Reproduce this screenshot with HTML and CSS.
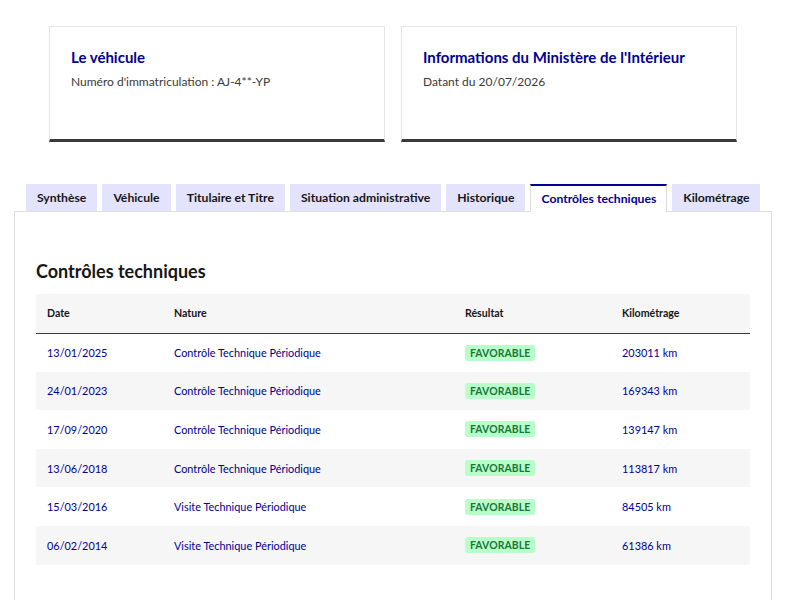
FILE: index.html
```html
<!DOCTYPE html>
<html lang="fr">
<head>
    <meta charset="UTF-8">
    <meta name="viewport" content="width=device-width, initial-scale=1.0">
    <title>Contrôles techniques</title>
    <link rel="stylesheet" href="styles.css">
</head>
<body>
    <div class="cards">
        <div class="card">
            <h2 class="card-title">Le véhicule</h2>
            <p class="card-text">Numéro d'immatriculation : AJ-4**-YP</p>
        </div>
        <div class="card">
            <h2 class="card-title">Informations du Ministère de l'Intérieur</h2>
            <p class="card-text">Datant du 20/07/2026</p>
        </div>
    </div>

    <div class="tabs">
        <ul class="tab-list">
            <li class="tab">Synthèse</li>
            <li class="tab">Véhicule</li>
            <li class="tab">Titulaire et Titre</li>
            <li class="tab">Situation administrative</li>
            <li class="tab">Historique</li>
            <li class="tab active">Contrôles techniques</li>
            <li class="tab">Kilométrage</li>
        </ul>
        <div class="tab-panel">
            <h3 class="panel-title">Contrôles techniques</h3>
            <table class="ct-table">
                <thead>
                    <tr>
                        <th class="col-date">Date</th>
                        <th class="col-nature">Nature</th>
                        <th class="col-result">Résultat</th>
                        <th>Kilométrage</th>
                    </tr>
                </thead>
                <tbody>
                    <tr>
                        <td>13/01/2025</td>
                        <td>Contrôle Technique Périodique</td>
                        <td><span class="badge">Favorable</span></td>
                        <td>203011 km</td>
                    </tr>
                    <tr>
                        <td>24/01/2023</td>
                        <td>Contrôle Technique Périodique</td>
                        <td><span class="badge">Favorable</span></td>
                        <td>169343 km</td>
                    </tr>
                    <tr>
                        <td>17/09/2020</td>
                        <td>Contrôle Technique Périodique</td>
                        <td><span class="badge">Favorable</span></td>
                        <td>139147 km</td>
                    </tr>
                    <tr>
                        <td>13/06/2018</td>
                        <td>Contrôle Technique Périodique</td>
                        <td><span class="badge">Favorable</span></td>
                        <td>113817 km</td>
                    </tr>
                    <tr>
                        <td>15/03/2016</td>
                        <td>Visite Technique Périodique</td>
                        <td><span class="badge">Favorable</span></td>
                        <td>84505 km</td>
                    </tr>
                    <tr>
                        <td>06/02/2014</td>
                        <td>Visite Technique Périodique</td>
                        <td><span class="badge">Favorable</span></td>
                        <td>61386 km</td>
                    </tr>
                </tbody>
            </table>
        </div>
    </div>
</body>
</html>
```

FILE: styles.css
```css
* {
    box-sizing: border-box;
}

body {
    font-family: Lato, Arial, sans-serif;
    background-color: #fff;
    color: #161616;
    margin: 0;
    padding: 26px 0 0 14px;
    width: 772px;
}

.cards {
    display: flex;
    gap: 16px;
    margin: 0 35px;
}

.card {
    flex: 1;
    height: 116px;
    border: 1px solid #e5e5e5;
    border-bottom: 3px solid #3a3a3a;
    padding: 18px 21px 0;
}

.card-title {
    margin: 0;
    font-size: 15px;
    font-weight: 700;
    color: #000091;
    line-height: 24px;
}

.card-text {
    margin: 1px 0 0;
    font-size: 12px;
    color: #3a3a3a;
    line-height: 24px;
}

.tabs {
    margin-top: 42px;
}

.tab-list {
    list-style: none;
    margin: 0;
    padding: 0 0 0 12px;
    display: flex;
    gap: 5px;
    align-items: flex-end;
}

.tab {
    background-color: #e3e3fd;
    font-size: 12.2px;
    font-weight: 700;
    color: #161616;
    white-space: nowrap;
    height: 27px;
    line-height: 27px;
    padding: 0 11px;
}

.tab.active {
    background-color: #fff;
    color: #000091;
    border-top: 2px solid #000091;
    border-left: 1px solid #ddd;
    border-right: 1px solid #ddd;
    height: 28px;
    line-height: 25px;
    padding: 0 10px;
    margin-bottom: -1px;
    position: relative;
    z-index: 1;
}

.tab-panel {
    border: 1px solid #ddd;
    padding: 45px 21px 40px;
}

.panel-title {
    margin: 0 0 9px;
    font-size: 18px;
    font-weight: 700;
    line-height: 28px;
    color: #161616;
}

.ct-table {
    width: 100%;
    border-collapse: collapse;
    font-size: 10.9px;
}

.ct-table th {
    text-align: left;
    font-size: 10.6px;
    font-weight: 700;
    color: #161616;
    background-color: #f6f6f6;
    height: 39px;
    padding: 0 11px;
    border-bottom: 1px solid #3a3a3a;
}

.col-date { width: 127px; }
.col-nature { width: 291px; }
.col-result { width: 157px; }

.ct-table td {
    color: #000091;
    height: 38.6px;
    padding: 0 11px;
}

.ct-table tbody tr:nth-child(even) td {
    background-color: #f6f6f6;
}

.badge {
    display: inline-block;
    background-color: #b8fec9;
    color: #18753c;
    font-weight: 700;
    font-size: 10.4px;
    text-transform: uppercase;
    letter-spacing: 0.1px;
    padding: 1px 5px;
    border-radius: 3px;
    line-height: 14px;
}
```
